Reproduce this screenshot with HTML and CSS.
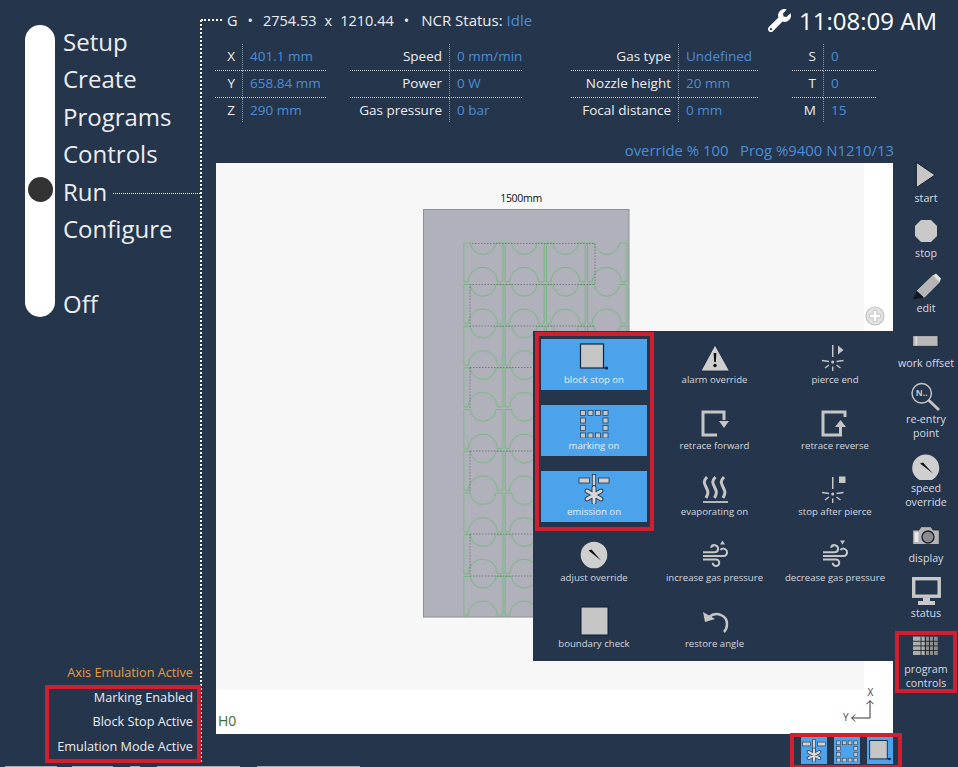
FILE: index.html
```html
<!DOCTYPE html>
<html lang="en">
  <head>
    <meta charset="UTF-8" />
    <meta name="viewport" content="width=device-width, initial-scale=1.0" />
    <title>Run</title>
    <link rel="stylesheet" href="styles.css">
  </head>
  <body>
    <svg class="defs" width="0" height="0">
      <defs>
        <symbol id="i-blockstop" viewBox="0 0 34 30">
          <rect x="3.5" y="2" width="23" height="24" fill="#c6c6c6" stroke="#12233c" stroke-width="1.2" />
          <circle cx="29.5" cy="26" r="1.6" fill="#0d1c33" />
          <path d="M26.5 26H29" stroke="#0d1c33" stroke-width="1" />
        </symbol>
        <symbol id="i-marking" viewBox="0 0 34 30">
          <g fill="#c6c6c6" stroke="#25354c" stroke-width="0.7">
            <rect x="3.5" y="2.5" width="5" height="5" /><rect x="11" y="2.5" width="5" height="5" /><rect x="18.5" y="2.5" width="5" height="5" /><rect x="26" y="2.5" width="5" height="5" />
            <rect x="3.5" y="10" width="5" height="5" /><rect x="26" y="10" width="5" height="5" />
            <rect x="3.5" y="17.5" width="5" height="5" /><rect x="26" y="17.5" width="5" height="5" />
            <rect x="3.5" y="25" width="5" height="5" /><rect x="11" y="25" width="5" height="5" /><rect x="18.5" y="25" width="5" height="5" /><rect x="26" y="25" width="5" height="5" />
          </g>
        </symbol>
        <symbol id="i-emission" viewBox="0 0 34 30">
          <g fill="#d0d0d0" stroke="#25354c" stroke-width="0.8">
            <rect x="2" y="4" width="10.5" height="5" /><rect x="21.5" y="4" width="10.5" height="5" />
            <rect x="15.3" y="0.5" width="3.4" height="16" />
          </g>
          <g stroke="#25354c" stroke-width="4.8" stroke-linecap="round">
            <path d="M17 13.5V28.5M10 17L24 25M24 17L10 25" />
          </g>
          <g stroke="#d8d8d8" stroke-width="3" stroke-linecap="round">
            <path d="M17 13.5V28.5M10 17L24 25M24 17L10 25" />
          </g>
        </symbol>
        <symbol id="i-sparks" viewBox="0 0 34 30">
          <g stroke="#c6c6c6" stroke-width="1.4" fill="none">
            <path d="M4 18.5L11 19.5M25.5 18.5L18.5 19.5M7 26L11 23M22.5 26L18.5 23M14.7 24.5V29" />
          </g>
          <circle cx="14.7" cy="20" r="1.5" fill="#c6c6c6" />
          <rect x="14" y="3" width="1.5" height="12" fill="#c6c6c6" />
        </symbol>
        <symbol id="i-wind" viewBox="0 0 34 30">
          <g stroke="#c6c6c6" stroke-width="2" fill="none">
            <path d="M5 12.3H17a3.6 3.6 0 1 0-4-4.5" />
            <path d="M5 16H25a3.7 3.7 0 1 0-2.5-6" />
            <path d="M5 19.5H18a3.3 3.3 0 1 1-3.3 3.3" />
          </g>
        </symbol>
        <symbol id="i-dial" viewBox="0 0 34 30">
          <circle cx="17" cy="15" r="13.3" fill="#cfcfcf" />
          <path d="M11.5 10.5L14.5 9.5L24 20.5Z" fill="#111" />
        </symbol>
      </defs>
    </svg>

    <div class="app">
      <aside class="sidebar">
        <div class="menu">
          <div class="rail"><span class="rail-dot"></span></div>
          <ul class="menu-list">
            <li>Setup</li>
            <li>Create</li>
            <li>Programs</li>
            <li>Controls</li>
            <li class="menu-active">Run<span class="lead"></span></li>
            <li>Configure</li>
            <li class="menu-gap"></li>
            <li>Off</li>
          </ul>
        </div>
        <div class="notices">
          <p class="notice-warn">Axis Emulation Active</p>
          <p>Marking Enabled</p>
          <p>Block Stop Active</p>
          <p>Emulation Mode Active</p>
        </div>
      </aside>

      <main class="main">
        <div class="topbar">
          <div class="position">
            <span class="lead-top"></span>
            <span>G</span><span class="sep">•</span>
            <span>2754.53</span><span class="times">x</span><span>1210.44</span><span class="sep sep-last">•</span>
            <span class="status">NCR Status: <span class="val">Idle</span></span>
          </div>
          <div class="clock">
            <svg width="23" height="23" viewBox="0 0 512 512"><path fill="#fff" d="M507.73 109.1c-2.24-9.03-13.54-12.09-20.12-5.51l-74.36 74.36-67.88-11.31-11.31-67.88 74.36-74.36c6.62-6.62 3.43-17.9-5.66-20.16-47.38-11.74-99.55.91-136.58 37.93-39.64 39.64-50.55 97.1-34.05 147.2L18.74 402.76c-24.99 24.99-24.99 65.51 0 90.5 24.99 24.99 65.51 24.99 90.5 0l213.21-213.21c50.12 16.71 107.47 5.68 147.37-34.22 37.07-37.07 49.7-89.32 37.91-136.73zM64 472c-13.25 0-24-10.75-24-24 0-13.26 10.75-24 24-24s24 10.74 24 24c0 13.25-10.75 24-24 24z" /></svg>
            <span>11:08:09 AM</span>
          </div>
        </div>

        <div class="readouts">
          <div class="group group-axis">
            <div class="lbl">X</div><div class="val">401.1 mm</div>
            <div class="lbl">Y</div><div class="val">658.84 mm</div>
            <div class="lbl">Z</div><div class="val">290 mm</div>
          </div>
          <div class="group group-feed">
            <div class="lbl">Speed</div><div class="val">0 mm/min</div>
            <div class="lbl">Power</div><div class="val">0 W</div>
            <div class="lbl">Gas pressure</div><div class="val">0 bar</div>
          </div>
          <div class="group group-gas">
            <div class="lbl">Gas type</div><div class="val">Undefined</div>
            <div class="lbl">Nozzle height</div><div class="val">20 mm</div>
            <div class="lbl">Focal distance</div><div class="val">0 mm</div>
          </div>
          <div class="group group-codes">
            <div class="lbl">S</div><div class="val">0</div>
            <div class="lbl">T</div><div class="val">0</div>
            <div class="lbl">M</div><div class="val">15</div>
          </div>
        </div>

        <div class="workspace">
          <div class="center">
            <div class="override">override % 100 &nbsp; Prog %9400 N1210/13</div>

            <div class="canvas">
              <svg class="plot" width="648" height="527" viewBox="0 0 648 527">
                <defs>
                  <pattern id="part" x="247.3" y="79.3" width="41.3" height="41.7" patternUnits="userSpaceOnUse">
                    <path d="M0.5 0.5H7A12.8 12.8 0 0 0 32.5 0.5H39.5V39.5H34A14.5 14.5 0 0 0 5 39.5H0.5Z" fill="none" stroke="#6cb878" stroke-width="0.9" />
                  </pattern>
                </defs>
                <text x="305" y="39" class="plot-dim">1500mm</text>
                <rect x="207.5" y="46.5" width="205.5" height="407.5" fill="#b1b1bb" stroke="#8f8f95" stroke-width="1" />
                <rect x="247.3" y="79.3" width="165" height="375" fill="url(#part)" />
                <path d="M256 80.5H379V121.5H254V163H379M254 204.5H379M254 204.5V246M254 288H379M254 288V329M254 371H379M254 371V413H379" fill="none" stroke="#6a6a72" stroke-width="0.8" stroke-dasharray="1.5 1.5" />
              </svg>
              <div class="canvas-foot">
                <span class="canvas-code">H0</span>
                <svg class="axes" width="40" height="44" viewBox="0 0 40 44">
                  <text x="27.5" y="6" class="axis-label">X</text>
                  <text x="2.7" y="31" class="axis-label">Y</text>
                  <path d="M27 10.7V28H8.7M23.5 14.2L27 10.7L30.5 14.2M12.2 24.5L8.7 28L12.2 31.5" fill="none" stroke="#333" stroke-width="1" />
                </svg>
              </div>

              <svg class="zoom-btn" width="20" height="20" viewBox="0 0 20 20">
                <circle cx="10" cy="10" r="9" fill="#e4e4e4" stroke="#c2c2c2" stroke-width="1.2" />
                <path d="M10 4.5V15.5M4.5 10H15.5" stroke="#fff" stroke-width="3.4" />
                <path d="M8.2 4.5H11.8V8.2H15.5V11.8H11.8V15.5H8.2V11.8H4.5V8.2H8.2Z" fill="none" stroke="#bbb" stroke-width="0.8" />
              </svg>

              <div class="popup">
                <div class="popup-grid">
                  <div class="pcell on"><svg><use href="#i-blockstop" /></svg><span>block stop on</span></div>
                  <div class="pcell">
                    <svg viewBox="0 0 34 30"><path d="M17 3L31.5 29H3Z" fill="#cfcfcf" stroke="#12233c" stroke-width="0.8" /><path d="M15.6 11H18.4L17.8 20H16.2Z" fill="#111" /><circle cx="17" cy="23.5" r="1.7" fill="#111" /></svg>
                    <span>alarm override</span>
                  </div>
                  <div class="pcell">
                    <svg viewBox="0 0 34 30"><use href="#i-sparks" /><path d="M20 3.5L25.5 8L20 12.5Z" fill="#c6c6c6" /></svg>
                    <span>pierce end</span>
                  </div>

                  <div class="pcell on"><svg><use href="#i-marking" /></svg><span>marking on</span></div>
                  <div class="pcell">
                    <svg viewBox="0 0 34 30"><path d="M26 12V4H5V27H19" fill="none" stroke="#c6c6c6" stroke-width="3" /><path d="M21 13H31L26 20Z" fill="#c6c6c6" /></svg>
                    <span>retrace forward</span>
                  </div>
                  <div class="pcell">
                    <svg viewBox="0 0 34 30"><path d="M27 9V4H5V27H22.5V17" fill="none" stroke="#c6c6c6" stroke-width="3" /><path d="M17 19H28L22.5 12Z" fill="#c6c6c6" /></svg>
                    <span>retrace reverse</span>
                  </div>

                  <div class="pcell on"><svg><use href="#i-emission" /></svg><span>emission on</span></div>
                  <div class="pcell">
                    <svg viewBox="0 0 34 30"><path d="M9 3C5 7 6 9 8 13C10 17 11 19 8 24M17.5 3C13.5 7 14.5 9 16.5 13C18.5 17 19.5 19 16.5 24M26 3C22 7 23 9 25 13C27 17 28 19 25 24" fill="none" stroke="#c6c6c6" stroke-width="3" /><path d="M5 28H30" stroke="#c6c6c6" stroke-width="1.8" /></svg>
                    <span>evaporating on</span>
                  </div>
                  <div class="pcell">
                    <svg viewBox="0 0 34 30"><use href="#i-sparks" /><rect x="21" y="2.5" width="6.5" height="6.5" fill="#c6c6c6" /></svg>
                    <span>stop after pierce</span>
                  </div>

                  <div class="pcell"><svg><use href="#i-dial" /></svg><span>adjust override</span></div>
                  <div class="pcell">
                    <svg viewBox="0 0 34 30"><use href="#i-wind" /><path d="M24.5 0.5L22 4.5H27Z" fill="#c6c6c6" /></svg>
                    <span>increase gas pressure</span>
                  </div>
                  <div class="pcell">
                    <svg viewBox="0 0 34 30"><use href="#i-wind" /><path d="M24.5 4.5L22 0.5H27Z" fill="#c6c6c6" /></svg>
                    <span>decrease gas pressure</span>
                  </div>

                  <div class="pcell">
                    <svg viewBox="0 0 34 30"><rect x="4" y="1" width="27" height="28" fill="#c6c6c6" stroke="#0d1c33" stroke-width="1" /></svg>
                    <span>boundary check</span>
                  </div>
                  <div class="pcell">
                    <svg viewBox="0 0 34 30"><path d="M11 11C18 5 29 9 29 18C29 21 28 24 26 26" fill="none" stroke="#c6c6c6" stroke-width="2.5" /><path d="M5 6L7 16L17 13Z" fill="#c6c6c6" /></svg>
                    <span>restore angle</span>
                  </div>
                </div>
                <div class="popup-mark"></div>
              </div>
            </div>

            <div class="tray">
              <div class="tray-btn"><svg><use href="#i-emission" /></svg></div>
              <div class="tray-btn"><svg><use href="#i-marking" /></svg></div>
              <div class="tray-btn"><svg><use href="#i-blockstop" /></svg></div>
              <div class="tray-mark"></div>
            </div>
          </div>

          <nav class="tools">
            <div class="tool">
              <svg width="44" height="29" viewBox="0 0 44 29"><path d="M12.3 1.3L31 14L12.3 26.7Z" fill="#c6c6c6" stroke="#111a28" stroke-width="1" /></svg>
              <span>start</span>
            </div>
            <div class="tool">
              <svg width="44" height="27" viewBox="0 0 44 27"><path d="M17 2H27L33 8V18L27 24H17L11 18V8Z" fill="#c9c9c9" /></svg>
              <span>stop</span>
            </div>
            <div class="tool">
              <svg width="44" height="28" viewBox="0 0 44 28"><path d="M13 19L29 3.5L35.5 10L20 25.5Z" fill="#b5b5b5" stroke="#d6d6d6" stroke-width="0.8" /><path d="M13 19L20 25.5L9 27.5Z" fill="#10161f" /><path d="M29 3.5L32 1.5L37 6.5L35.5 10Z" fill="#e4e4e4" /></svg>
              <span>edit</span>
            </div>
            <div class="tool">
              <svg width="44" height="24" viewBox="0 0 44 24"><rect x="8.7" y="4.7" width="25.3" height="10.6" fill="#b8b8b8" stroke="#1a2433" stroke-width="0.8" /><rect x="11.5" y="5.5" width="1.6" height="9" fill="#e0e0e0" /></svg>
              <span>work offset</span>
            </div>
            <div class="tool">
              <svg width="44" height="29" viewBox="0 0 44 29">
                <circle cx="17.7" cy="11.3" r="9.7" fill="none" stroke="#c6c6c6" stroke-width="1.5" />
                <text x="17.7" y="14.2" class="lens-text">N..</text>
                <path d="M24.5 18L35 28" stroke="#c6c6c6" stroke-width="2.8" />
              </svg>
              <span>re-entry<br />point</span>
            </div>
            <div class="tool">
              <svg width="44" height="28" viewBox="0 0 44 28"><circle cx="21.7" cy="16" r="13.5" fill="#cfcfcf" /><path d="M16 11.5L19 10.5L29 21.5Z" fill="#111" /></svg>
              <span>speed<br />override</span>
            </div>
            <div class="tool">
              <svg width="44" height="27" viewBox="0 0 44 27">
                <path d="M8.7 7H15L17 3.7H27L29 7H35.3V21.5H8.7Z" fill="#b5b5b5" stroke="#1a2433" stroke-width="0.8" />
                <circle cx="24" cy="14" r="6" fill="#8b8b8b" stroke="#1a2433" stroke-width="1.4" />
                <rect x="10.5" y="9" width="4" height="10" fill="#e8e8e8" />
              </svg>
              <span>display</span>
            </div>
            <div class="tool">
              <svg width="44" height="31" viewBox="0 0 44 31"><rect x="9.7" y="4.7" width="25.5" height="17.5" fill="#25354c" stroke="#c9c9c9" stroke-width="3.4" /><path d="M19 24H26V27H31V31H14V27H19Z" fill="#c9c9c9" /></svg>
              <span>status</span>
            </div>
            <div class="tool">
              <svg width="44" height="27" viewBox="0 0 44 27">
                <rect x="9" y="2.7" width="24.7" height="18.3" fill="#8d8d8d" />
                <rect x="9" y="2.7" width="11" height="18.3" fill="#aeaeae" />
                <path d="M9 7.3H33.7M9 11.9H33.7M9 16.5H33.7M17 2.7V21M21.5 2.7V21M25.5 2.7V21M29.5 2.7V21" stroke="#11161f" stroke-width="0.8" />
              </svg>
              <span>program<br />controls</span>
            </div>
            <div class="tool-mark"></div>
          </nav>
        </div>
      </main>
    </div>

    <div class="notice-mark"></div>
    <div class="cutoff">
      <span class="cut-a"></span><span class="cut-b"></span><span class="cut-c"></span><span class="cut-d"></span><span class="cut-e"></span>
    </div>
  </body>
</html>
```

FILE: styles.css
```css
* {
  box-sizing: border-box;
}

html,
body {
  margin: 0;
  padding: 0;
}

body {
  position: relative;
  width: 958px;
  height: 767px;
  overflow: hidden;
  background-color: #25354c;
  color: #eceef1;
  font-family: "Open Sans", "Liberation Sans", sans-serif;
}

.defs {
  position: absolute;
}

.app {
  display: grid;
  grid-template-columns: 201px 757px;
  height: 767px;
}

/* left menu */
.sidebar {
  display: flex;
  flex-direction: column;
  justify-content: space-between;
  height: 742px;
  margin: 20px -1px 0 0;
  padding: 5px 0 0 25px;
  border-right: 2px dotted #fff;
}

.menu {
  display: flex;
}

.rail {
  display: flex;
  flex-direction: column;
  align-items: center;
  width: 30px;
  height: 292px;
  padding-top: 152px;
  background-color: #fff;
  border-radius: 15px;
}

.rail-dot {
  width: 25px;
  height: 25px;
  background-color: #333;
  border-radius: 50%;
}

.menu-list {
  flex: 1;
  list-style: none;
  margin: -2px 0 0 8px;
  padding: 0;
  font-size: 24px;
  line-height: 37.4px;
}

.menu-gap {
  height: 37.4px;
}

.menu-active {
  display: flex;
  align-items: center;
}

.lead {
  flex: 1;
  margin: 4px 0 0 6px;
  border-top: 1px dotted #fff;
}

.notices {
  padding: 0 7px 4px 0;
  font-size: 12.7px;
  line-height: 24.4px;
  text-align: right;
}

.notices p {
  margin: 0;
}

.notices .notice-warn {
  color: #e79f3c;
}

.notice-mark {
  position: absolute;
  left: 45px;
  top: 685px;
  width: 156px;
  height: 78px;
  border: 4px solid #d01f2f;
}

/* clipped line at the very bottom of the capture */
.cutoff {
  position: absolute;
  left: 5px;
  bottom: 0;
  display: flex;
  height: 1px;
}

.cutoff span {
  background-color: #a7aeb9;
}

.cut-a {
  width: 52px;
}

.cut-b {
  width: 41px;
  margin-left: 15px;
}

.cut-c {
  width: 10px;
  margin-left: 17px;
}

.cut-d {
  width: 83px;
  margin-left: 17px;
}

.cut-e {
  width: 103px;
  margin-left: 17px;
}

/* header */
.topbar {
  display: flex;
  justify-content: space-between;
  align-items: center;
  height: 40px;
  padding-right: 21px;
}

.position {
  display: flex;
  align-items: center;
  gap: 7px;
  font-size: 14.5px;
}

.lead-top {
  width: 21px;
  margin-right: -2px;
  border-top: 2px dotted #fff;
}

.sep {
  margin: 0 3px;
}

.sep-last {
  margin-right: 5px;
}

.times {
  margin: 0 1px;
}

.status {
  font-size: 15px;
}

.val {
  color: #4a8fd8;
}

.clock {
  display: flex;
  align-items: center;
  gap: 8px;
  font-size: 24px;
  color: #fff;
}

.readouts {
  display: flex;
  margin: 4px 0 0 14px;
  font-size: 13.5px;
}

.group {
  display: grid;
  grid-template-rows: 27px 26.5px 24px;
  line-height: 24.5px;
}

.group .lbl {
  padding-right: 7px;
  text-align: right;
  white-space: nowrap;
}

.group .val {
  padding-left: 7px;
  border-left: 1px dotted #8b97a8;
  white-space: nowrap;
}

.group .lbl:nth-child(-n + 4),
.group .val:nth-child(-n + 4) {
  border-bottom: 1px dotted #c9ced6;
}

.group-axis {
  grid-template-columns: 27px 84px;
}

.group-feed {
  grid-template-columns: 99px 73px;
  margin-left: 24px;
}

.group-gas {
  grid-template-columns: 107px 80px;
  margin-left: 49px;
}

.group-codes {
  grid-template-columns: 31px 53px;
  margin-left: 34px;
}

/* main work area */
.workspace {
  display: grid;
  grid-template-columns: 692px 65px;
  margin-top: 18px;
}

.override {
  height: 23px;
  margin-right: -1px;
  line-height: 20px;
  font-size: 14.9px;
  color: #4a8fd8;
  text-align: right;
}

.canvas {
  position: relative;
  width: 677px;
  height: 571px;
  margin-left: 15px;
  background-color: #fff;
}

.plot {
  display: block;
  background-color: #f7f7f7;
}

.plot-dim {
  font-size: 10.5px;
  letter-spacing: -0.3px;
  fill: #111;
  text-anchor: middle;
}

.canvas-foot {
  display: flex;
  justify-content: space-between;
  align-items: flex-end;
  height: 44px;
}

.canvas-code {
  padding-left: 2px;
  line-height: 26px;
  font-size: 14px;
  color: #3f6d30;
}

.axes {
  margin-right: 10px;
  overflow: visible;
}

.axis-label {
  font-size: 10px;
  fill: #444;
  text-anchor: middle;
}

.zoom-btn {
  position: absolute;
  left: 649px;
  top: 143px;
}

/* program controls popup */
.popup {
  position: absolute;
  left: 317px;
  top: 168px;
  width: 360px;
  height: 330px;
  padding: 8px 0 0 1px;
  background-color: #25354c;
}

.popup-grid {
  display: grid;
  grid-template-columns: repeat(3, 120.5px);
  grid-auto-rows: 51px;
  row-gap: 15px;
}

.pcell {
  display: flex;
  flex-direction: column;
  align-items: center;
  width: 106px;
  margin-left: 7px;
  padding-top: 3px;
  color: #d4d8de;
  font-size: 9.6px;
  line-height: 13px;
  white-space: nowrap;
}

.pcell svg {
  flex: none;
  width: 34px;
  height: 30px;
  margin-bottom: 1px;
  overflow: visible;
}

.pcell.on {
  background-color: #4ba3ec;
  color: #e8eef5;
}

.popup-mark {
  position: absolute;
  left: 2px;
  top: 1px;
  width: 119px;
  height: 199px;
  border: 4px solid #d01f2f;
}

/* quick state buttons */
.tray {
  position: relative;
  display: flex;
  justify-content: flex-end;
  gap: 7px;
  padding-top: 3px;
}

.tray-btn {
  display: flex;
  align-items: center;
  justify-content: center;
  width: 26px;
  height: 27px;
  background-color: #4ba3ec;
}

.tray-btn svg {
  width: 26px;
  height: 23px;
}

.tray-mark {
  position: absolute;
  right: -9px;
  top: -1px;
  width: 112px;
  height: 36px;
  border: 4px solid #d01f2f;
}

/* right toolbar */
.tools {
  position: relative;
  display: grid;
  grid-template-rows: 57px 54px 59px 51px 70px 71px 51px 60px 60px;
  padding: 21px 0 0 1px;
}

.tool {
  display: flex;
  flex-direction: column;
  align-items: center;
  color: #d8dce2;
  font-size: 10.7px;
  line-height: 14px;
  text-align: center;
  white-space: nowrap;
}

.tool span {
  margin-top: 1px;
}

.tool svg {
  flex: none;
}

.lens-text {
  font-size: 8.5px;
  font-weight: 700;
  fill: #c6c6c6;
  text-anchor: middle;
}

.tool-mark {
  position: absolute;
  left: 2px;
  top: 491px;
  width: 62px;
  height: 62px;
  border: 4px solid #d01f2f;
}
```
